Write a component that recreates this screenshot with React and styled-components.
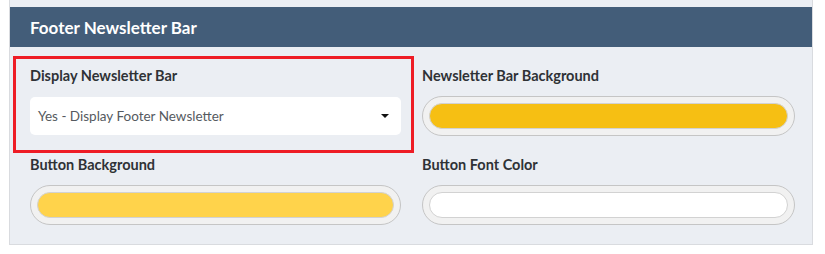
import styled, { createGlobalStyle } from 'styled-components';

const GlobalStyle = createGlobalStyle`
  body {
    margin: 0;
    background: #ffffff;
    font-family: Lato, "Open Sans", sans-serif;
  }
`;

const Panel = styled.div`
  width: 802px;
  margin: 0 0 0 9px;
  padding-top: 7px;
  background: #ebeef3;
  border: 1px solid #d9dbdf;
  border-top: none;
`;

const Header = styled.div`
  height: 40px;
  display: flex;
  align-items: center;
  padding-left: 20px;
  background: #435d79;
  color: #ffffff;
  font-size: 17px;
  font-weight: 700;
`;

const Body = styled.div`
  display: grid;
  grid-template-columns: 371px 373px;
  column-gap: 21px;
  row-gap: 19px;
  padding: 19px 17px 19px 20px;
`;

const Field = styled.div`
  position: relative;
  display: flex;
  flex-direction: column;
`;

const Highlight = styled.div`
  position: absolute;
  left: -17px;
  right: -13px;
  top: -10px;
  bottom: -17px;
  border: 3px solid #ee1c25;
  pointer-events: none;
`;

const Label = styled.div`
  height: 20px;
  line-height: 20px;
  font-size: 14.5px;
  font-weight: 700;
  color: #2f3236;
  margin-bottom: ${(p) => (p.$tight ? '10px' : '11px')};
`;

const Select = styled.div`
  height: 38px;
  display: flex;
  align-items: center;
  justify-content: space-between;
  padding: 0 12px 0 8px;
  background: #ffffff;
  border-radius: 5px;
  font-size: 13.5px;
  color: #555a60;
`;

const Caret = styled.span`
  width: 0;
  height: 0;
  border-left: 4px solid transparent;
  border-right: 4px solid transparent;
  border-top: 4px solid #111;
`;

const Pill = styled.div`
  height: 40px;
  box-sizing: border-box;
  padding: 6px;
  background: #f1f1f1;
  border: 1px solid #c5c5c5;
  border-radius: 20px;
`;

const Swatch = styled.div`
  height: 100%;
  box-sizing: border-box;
  background: ${(p) => p.$color};
  border: 1px solid #d2d2d2;
  border-radius: 13px;
`;

const ColorField = ({ label, color }) => (
  <Field>
    <Label $tight>{label}</Label>
    <Pill>
      <Swatch $color={color} />
    </Pill>
  </Field>
);

export default function App() {
  return (
    <>
      <GlobalStyle />
      <Panel>
        <Header>Footer Newsletter Bar</Header>
        <Body>
          <Field>
            <Highlight />
            <Label>Display Newsletter Bar</Label>
            <Select>
              Yes - Display Footer Newsletter
              <Caret />
            </Select>
          </Field>
          <ColorField label="Newsletter Bar Background" color="#f6bf13" />
          <ColorField label="Button Background" color="#ffd34b" />
          <ColorField label="Button Font Color" color="#ffffff" />
        </Body>
      </Panel>
    </>
  );
}
